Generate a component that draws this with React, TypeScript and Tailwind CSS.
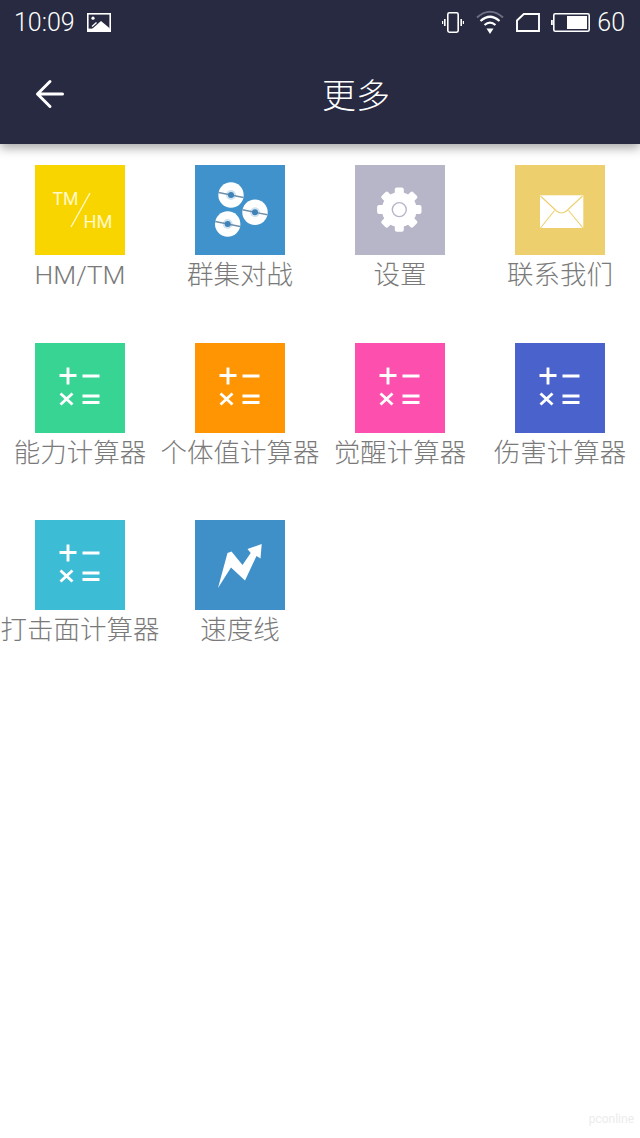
const labelFont = "font-['Roboto','Noto_Sans_CJK_SC',sans-serif]";

function Calc() {
  return (
    <svg viewBox="0 0 90 90" className="w-[90px] h-[90px]" fill="none" stroke="#fff" strokeWidth="2.9">
      <path d="M24.5 32.5h17M33 24.5v17M47.5 33h17M25.5 50.5l12 11M37.5 50.5l-12 11M47.5 53h17M47.5 59.5h17" />
    </svg>
  );
}

function Balls() {
  const balls = [
    [36, 30],
    [60, 47.3],
    [32.7, 59],
  ];
  return (
    <svg viewBox="0 0 90 90" className="w-[90px] h-[90px]">
      {balls.map(([x, y]) => (
        <g key={x}>
          <circle cx={x} cy={y} r="12.7" fill="#fff" />
          <circle cx={x} cy={y} r="5" fill="#cfe4f3" />
          <path d={`M${x - 12.5} ${y - 2.5}L${x + 12.5} ${y + 2.5}`} stroke="#6f8fa8" strokeWidth="1.4" />
          <circle cx={x} cy={y} r="3" fill="#3f82b8" />
        </g>
      ))}
    </svg>
  );
}

function Gear() {
  const teeth = [0, 45, 90, 135, 180, 225, 270, 315];
  return (
    <svg viewBox="0 0 90 90" className="w-[90px] h-[90px]">
      <circle cx="44.3" cy="44.6" r="17.5" fill="#fff" />
      {teeth.map((a) => (
        <rect key={a} x="39.8" y="22.4" width="9" height="9" rx="2" fill="#fff" transform={`rotate(${a} 44.3 44.6)`} />
      ))}
      <circle cx="44.3" cy="44.6" r="7" fill="#fff" stroke="#b7b5c8" strokeWidth="1.4" />
    </svg>
  );
}

function Mail() {
  return (
    <svg viewBox="0 0 90 90" className="w-[90px] h-[90px]">
      <rect x="25" y="30.3" width="43.3" height="32.7" fill="#fff" />
      <path d="M25.5 31l16 15q5 4 10 0l16-15M25.5 63l14-17.5M68 63L53.5 45.5" fill="none" stroke="#edcf6d" strokeWidth="1.1" />
    </svg>
  );
}

function TmHm() {
  return (
    <svg viewBox="0 0 90 90" className="w-[90px] h-[90px]" fill="#fff8c8" fontFamily="Roboto, sans-serif" fontWeight="400">
      <text x="17.5" y="40" fontSize="19" textLength="26" lengthAdjust="spacingAndGlyphs">TM</text>
      <text x="48.5" y="63" fontSize="19" textLength="29" lengthAdjust="spacingAndGlyphs">HM</text>
      <path d="M55 28L36 62" stroke="#fff8c8" strokeWidth="1.4" />
    </svg>
  );
}

function Speed() {
  return (
    <svg viewBox="0 0 90 90" className="w-[90px] h-[90px]">
      <path d="M23 68L32.5 33L36.5 31.5L47.5 45L55.7 33L52.5 29L66.7 24L65.5 38.5L61.5 36L50 60.5L36 47.5Z" fill="#fff" />
    </svg>
  );
}

const items = [
  { label: "HM/TM", bg: "bg-[#f9d500]", icon: <TmHm /> },
  { label: "群集对战", bg: "bg-[#3f92cc]", icon: <Balls /> },
  { label: "设置", bg: "bg-[#b7b5c8]", icon: <Gear /> },
  { label: "联系我们", bg: "bg-[#edcf6d]", icon: <Mail /> },
  { label: "能力计算器", bg: "bg-[#38d493]", icon: <Calc /> },
  { label: "个体值计算器", bg: "bg-[#ff9503]", icon: <Calc /> },
  { label: "觉醒计算器", bg: "bg-[#fd4fae]", icon: <Calc /> },
  { label: "伤害计算器", bg: "bg-[#4a62cc]", icon: <Calc /> },
  { label: "打击面计算器", bg: "bg-[#3cbdd5]", icon: <Calc /> },
  { label: "速度线", bg: "bg-[#3f90c9]", icon: <Speed /> },
];

function StatusLeft() {
  return (
    <div className="flex items-center gap-[12px] pl-[14px]">
      <span className="font-['Roboto',sans-serif] font-light text-[25px] leading-none text-white">10:09</span>
      <svg width="24" height="19" viewBox="0 0 24 19">
        <rect x="0" y="0" width="24" height="19" fill="#fff" />
        <rect x="1.6" y="1.6" width="20.8" height="14" fill="#272a40" />
        <circle cx="6" cy="5.2" r="1.6" fill="#fff" />
        <path d="M1.6 19L14 8l8.4 7v4Z" fill="#fff" />
        <path d="M5 13.5l4.5-4" stroke="#fff" strokeWidth="1.4" />
      </svg>
    </div>
  );
}

function StatusRight() {
  return (
    <div className="flex items-center pr-[15px]">
      <svg width="22" height="21" viewBox="0 0 22 21" fill="none" stroke="#fff" className="mr-[12px]">
        <rect x="5.8" y="0.8" width="10.4" height="19.4" rx="1.6" strokeWidth="1.6" />
        <path d="M2.8 7v7M19.2 7v7" strokeWidth="1.6" />
        <path d="M0.6 9v3M21.4 9v3" strokeWidth="1.2" />
      </svg>
      <svg width="28" height="26" viewBox="0 0 28 26" fill="none" className="mr-[12px]">
        <path d="M1 8.5Q14 -3 27 8.5" stroke="#6d7084" strokeWidth="2" />
        <path d="M4.5 12Q14 3.5 23.5 12" stroke="#fff" strokeWidth="2.2" />
        <path d="M8.5 16Q14 11.3 19.5 16" stroke="#fff" strokeWidth="2.2" />
        <path d="M10.5 19.5h7L14 25Z" fill="#fff" />
      </svg>
      <svg width="24" height="19" viewBox="0 0 24 19" fill="none" className="mr-[11px]">
        <path d="M1 18V7.5L7.8 1H23v17Z" stroke="#fff" strokeWidth="1.9" />
      </svg>
      <svg width="39" height="19" viewBox="0 0 39 19" fill="none" className="mr-[7px]">
        <rect x="0" y="7" width="1.8" height="5" fill="#fff" />
        <rect x="2.8" y="0.8" width="35.4" height="17.4" rx="1.5" stroke="#fff" strokeWidth="1.6" />
        <rect x="16" y="3" width="20" height="13" fill="#fff" />
      </svg>
      <span className="font-['Roboto',sans-serif] font-light text-[25px] leading-none text-white">60</span>
    </div>
  );
}

export default function App() {
  return (
    <div className="relative h-[1138px] w-[640px] overflow-hidden bg-white">
      <header className="relative z-10 h-[144px] bg-[#272a40] shadow-[0_4px_10px_rgba(0,0,0,0.35)]">
        <div className="flex h-[44px] items-center justify-between">
          <StatusLeft />
          <StatusRight />
        </div>
        <div className="flex h-[100px] items-center">
          <div className="flex w-[72px] justify-end pr-[7px]">
            <svg width="30" height="30" viewBox="0 0 30 30" fill="none" stroke="#fff" strokeWidth="3" strokeLinecap="round" strokeLinejoin="round">
              <path d="M2.5 15h25M15 2.5L2.5 15 15 27.5" />
            </svg>
          </div>
          <h1 className="flex-1 text-center font-['Noto_Sans_CJK_SC',sans-serif] text-[34px] font-light leading-none text-white">
            更多
          </h1>
        </div>
      </header>
      <main className="grid grid-cols-4 auto-rows-[177.5px] pt-[21px]">
        {items.map((it) => (
          <div key={it.label} className="flex flex-col items-center">
            <div className={`h-[90px] w-[90px] ${it.bg}`}>{it.icon}</div>
            <span className={`mt-[2px] whitespace-nowrap text-[26.5px] font-light leading-[36px] text-[#7a7a7a] ${labelFont}`}>
              {it.label}
            </span>
          </div>
        ))}
      </main>
      <span className="absolute bottom-[10px] right-[6px] font-['Roboto',sans-serif] text-[12px] text-[#ececec]">pconline</span>
    </div>
  );
}
